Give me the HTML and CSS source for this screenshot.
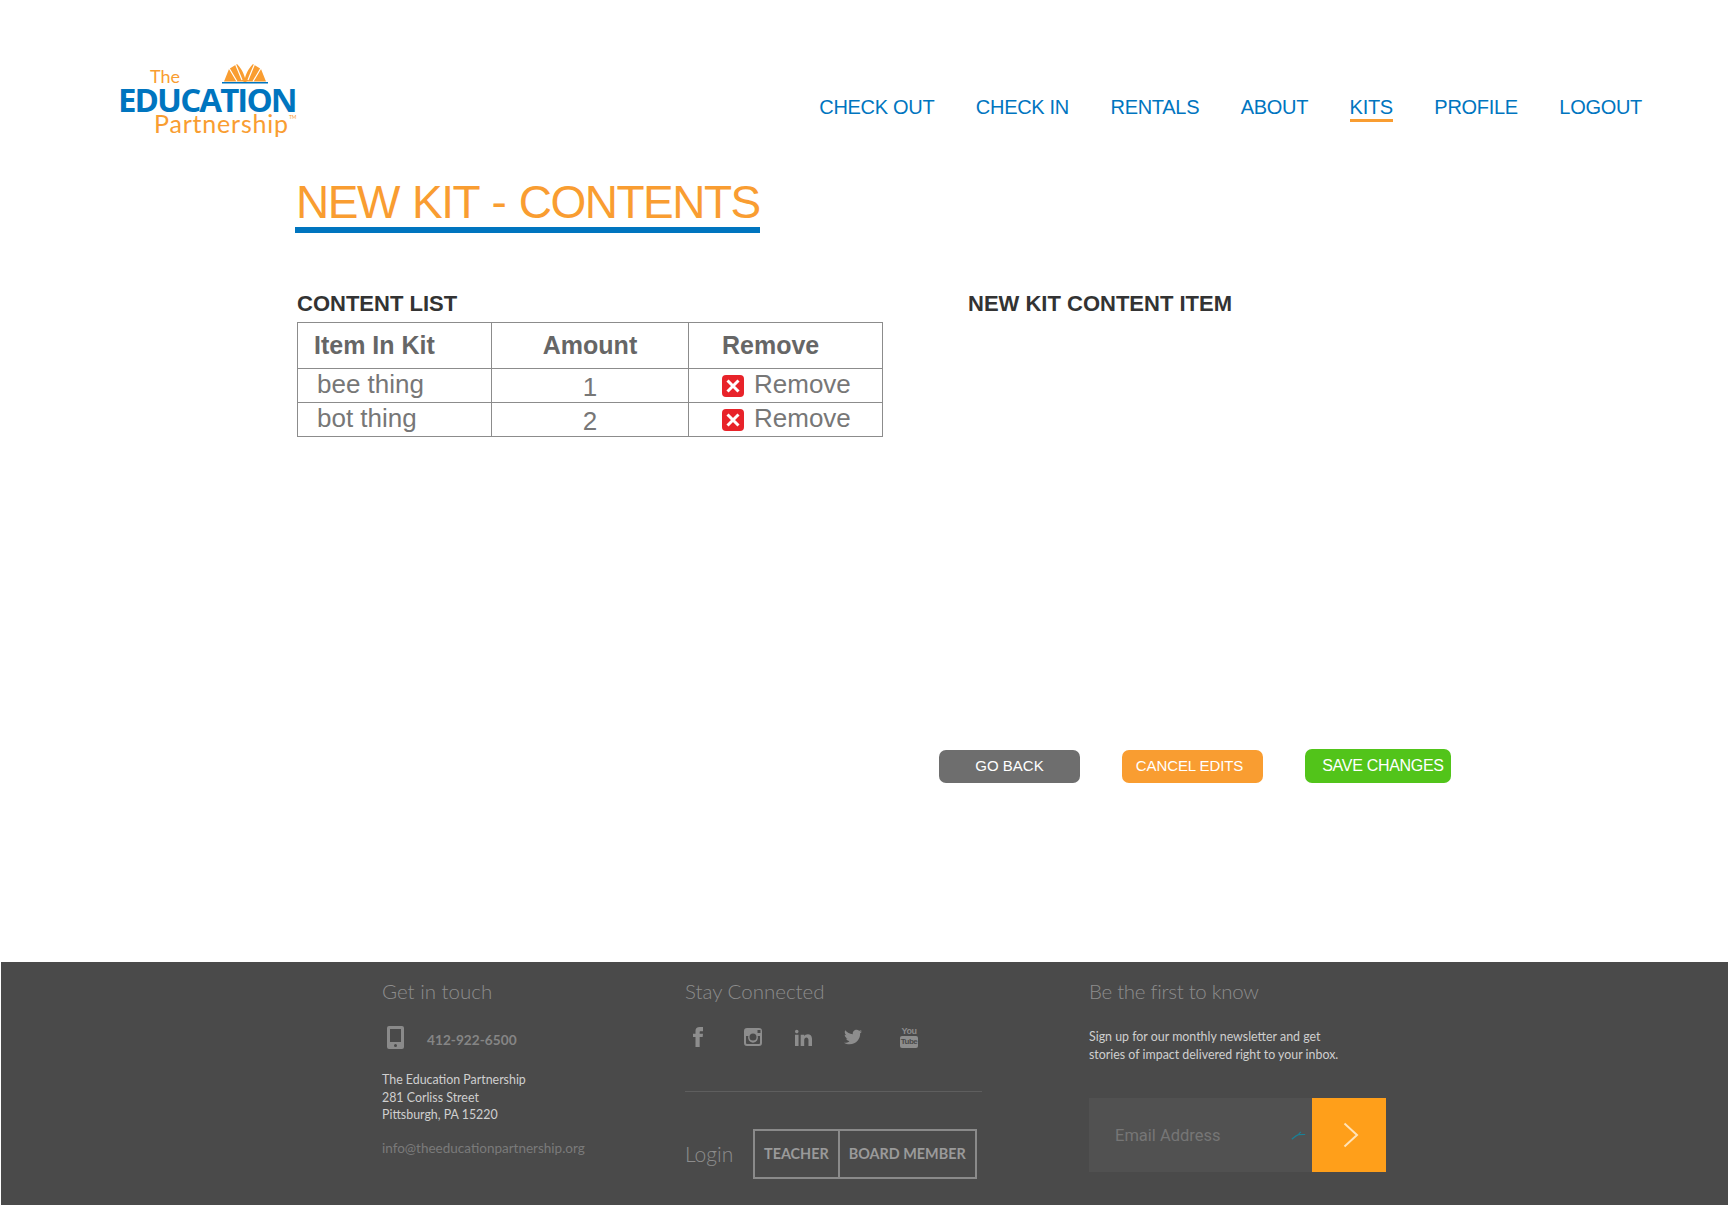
FILE: index.html
```html
<!DOCTYPE html>
<html lang="en">
<head>
  <meta charset="UTF-8" />
  <title>New Kit - Contents</title>
  <link rel="stylesheet" href="styles.css">
</head>
<body>
  <header class="site-header">
    <a class="logo" href="#">
      <div class="logo-top">
        <span class="logo-the">The</span>
        <svg class="logo-book" viewBox="0 0 46 21" width="46" height="21">
          <path fill="#f99d31" d="M2 18.500 7 6l8-5c3 3 6 7 8 14 2-7 5-11 8-14l8 5 5 12.500H25l-2 1-2-1z"/>
          <path fill="none" stroke="#fff" stroke-width="1.200" d="M15 18.500 7 5M20 17 13 0M26 17 33 0M31 18.500 39 5"/>
          <rect x="0" y="19" width="46" height="1.500" fill="#0075bf"/>
        </svg>
      </div>
      <div class="logo-main">EDUCATION</div>
      <div class="logo-sub">Partnership<sup>TM</sup></div>
    </a>
    <nav class="main-nav">
      <a href="#">CHECK OUT</a>
      <a href="#">CHECK IN</a>
      <a href="#">RENTALS</a>
      <a href="#">ABOUT</a>
      <a href="#" class="active">KITS</a>
      <a href="#">PROFILE</a>
      <a href="#">LOGOUT</a>
    </nav>
  </header>

  <main class="content">
    <h1 class="page-title">NEW KIT - CONTENTS</h1>

    <div class="columns">
      <section class="list-col">
        <h2>CONTENT LIST</h2>
        <table class="kit-table">
          <thead>
            <tr>
              <th class="col-item">Item In Kit</th>
              <th class="col-amount">Amount</th>
              <th class="col-remove">Remove</th>
            </tr>
          </thead>
          <tbody>
            <tr>
              <td class="col-item">bee thing</td>
              <td class="col-amount">1</td>
              <td class="col-remove">
                <span class="remove-link">
                  <svg class="x-icon" viewBox="0 0 22 22" width="22" height="22"><rect width="22" height="22" rx="4" fill="#e8232a"/><path d="M5.500 5.500l11 11M16.500 5.500l-11 11" stroke="#fff" stroke-width="3"/></svg>
                  Remove
                </span>
              </td>
            </tr>
            <tr>
              <td class="col-item">bot thing</td>
              <td class="col-amount">2</td>
              <td class="col-remove">
                <span class="remove-link">
                  <svg class="x-icon" viewBox="0 0 22 22" width="22" height="22"><rect width="22" height="22" rx="4" fill="#e8232a"/><path d="M5.500 5.500l11 11M16.500 5.500l-11 11" stroke="#fff" stroke-width="3"/></svg>
                  Remove
                </span>
              </td>
            </tr>
          </tbody>
        </table>
      </section>
      <section class="item-col">
        <h2>NEW KIT CONTENT ITEM</h2>
      </section>
    </div>

    <div class="actions">
      <button class="btn btn-back">GO BACK</button>
      <button class="btn btn-cancel">CANCEL EDITS</button>
      <button class="btn btn-save">SAVE CHANGES</button>
    </div>
  </main>

  <footer class="site-footer">
    <div class="foot-col foot-touch">
      <h3>Get in touch</h3>
      <div class="phone-row">
        <svg viewBox="0 0 17 23" width="17" height="23"><path fill="#8a8a8a" fill-rule="evenodd" d="M2 0h13a2 2 0 0 1 2 2v19a2 2 0 0 1-2 2H2a2 2 0 0 1-2-2V2a2 2 0 0 1 2-2zm1 3v13h11V3zm5.500 15a1.500 1.500 0 1 0 0 3 1.500 1.500 0 0 0 0-3z"/></svg>
        <span>412-922-6500</span>
      </div>
      <p class="address">The Education Partnership<br>281 Corliss Street<br>Pittsburgh, PA 15220</p>
      <a class="foot-mail" href="#">info@theeducationpartnership.org</a>
    </div>

    <div class="foot-col foot-social">
      <h3>Stay Connected</h3>
      <div class="social-row">
        <svg class="ico-f" viewBox="0 0 24 24" width="20" height="20"><path d="M9 8H6v4h3v12h5V12h3.600l.4-4h-4V6.300c0-1 .2-1.300 1.100-1.300H18V0h-3.800C10.600 0 9 1.600 9 4.600z"/></svg>
        <svg class="ico-ig" viewBox="0 0 18 18" width="18" height="18"><path fill-rule="evenodd" d="M3 0h12a3 3 0 0 1 3 3v12a3 3 0 0 1-3 3H3a3 3 0 0 1-3-3V3a3 3 0 0 1 3-3zm10.500 2v3h3V2zM2 8v7a1 1 0 0 0 1 1h12a1 1 0 0 0 1-1V8h-2.300a5 5 0 1 1-9.400 0zm7-2.500a3.500 3.500 0 1 0 0 7 3.500 3.500 0 0 0 0-7z"/></svg>
        <svg class="ico-in" viewBox="0 0 24 24" width="17" height="17"><path d="M4.980 3.500c0 1.381-1.110 2.500-2.480 2.500s-2.480-1.119-2.480-2.500c0-1.380 1.110-2.500 2.480-2.500s2.480 1.120 2.480 2.500zm.02 4.500h-5v16h5v-16zm7.982 0h-4.968v16h4.969v-8.399c0-4.670 6.029-5.052 6.029 0v8.399h4.988v-10.131c0-7.880-8.922-7.593-11.018-3.714v-2.155z"/></svg>
        <svg class="ico-tw" viewBox="0 0 24 24" width="18" height="18"><path d="M24 4.557c-.883.392-1.832.656-2.828.775 1.017-.609 1.798-1.574 2.165-2.724-.951.564-2.005.974-3.127 1.195-.897-.957-2.178-1.555-3.594-1.555-3.179 0-5.515 2.966-4.797 6.045-4.091-.205-7.719-2.165-10.148-5.144-1.290 2.213-.669 5.108 1.523 6.574-.806-.026-1.566-.247-2.229-.616-.054 2.281 1.581 4.415 3.949 4.890-.693.188-1.452.232-2.224.084.626 1.956 2.444 3.379 4.600 3.419-2.070 1.623-4.678 2.348-7.290 2.040 2.179 1.397 4.768 2.212 7.548 2.212 9.142 0 14.307-7.721 13.995-14.646.962-.695 1.797-1.562 2.457-2.549z"/></svg>
        <span class="ico-yt"><span class="yt-you">You</span><span class="yt-tube">Tube</span></span>
      </div>
      <hr class="foot-rule">
      <div class="login-row">
        <span class="login-label">Login</span>
        <div class="login-btns">
          <a href="#">TEACHER</a>
          <a href="#">BOARD MEMBER</a>
        </div>
      </div>
    </div>

    <div class="foot-col foot-news">
      <h3>Be the first to know</h3>
      <p class="news-text">Sign up for our monthly newsletter and get<br>stories of impact delivered right to your inbox.</p>
      <form class="news-form">
        <div class="email-field">
          <span>Email Address</span>
          <svg viewBox="0 0 18 10" width="15" height="9"><path fill="none" stroke="#1b7f95" stroke-width="1.500" d="M1 9.500C4 7 6 5 9 4l8-.2M9 4C9.500 2.800 10.500 1.500 12 .8"/></svg>
        </div>
        <button type="button" class="email-go">
          <svg viewBox="0 0 16 26" width="16" height="26"><path fill="none" stroke="#ffe3b8" stroke-width="2" d="M1.500 1.500 14 13 1.500 24.500"/></svg>
        </button>
      </form>
    </div>
  </footer>
</body>
</html>
```

FILE: styles.css
```css
* {
  box-sizing: border-box;
}
html, body {
  height: 100%;
}
body {
  margin: 0;
  height: 1205px;
  overflow: hidden;
  display: flex;
  flex-direction: column;
  background: #fff;
  font-family: "Liberation Sans", Arial, sans-serif;
}
a {
  text-decoration: none;
  color: inherit;
}

/* header */
.site-header {
  display: flex;
  justify-content: space-between;
  align-items: flex-start;
  padding: 62px 86px 0 118px;
  height: 176px;
}
.logo {
  display: block;
  width: 180px;
  font-family: "Lato", sans-serif;
}
.logo-top {
  display: flex;
  align-items: flex-end;
  height: 25px;
  padding-left: 32px;
}
.logo-the {
  color: #f99d31;
  font-size: 18px;
  line-height: 18px;
  width: 72px;
  margin-bottom: 2px;
}
.logo-book {
  display: block;
  margin-bottom: 3px;
}
.logo-main {
  color: #0075bf;
  font-family: "Open Sans", sans-serif;
  font-weight: 700;
  font-size: 33px;
  line-height: 26px;
  letter-spacing: -1.9px;
  white-space: nowrap;
}
.logo-sub {
  color: #f99d31;
  font-size: 25px;
  line-height: 20px;
  padding-left: 36px;
  letter-spacing: 0.800px;
  white-space: nowrap;
}
.logo-sub sup {
  font-size: 5px;
  vertical-align: 14px;
  line-height: 0;
  letter-spacing: 0;
}
.main-nav {
  display: flex;
  gap: 41.500px;
  margin-top: 34px;
  font-size: 20px;
  letter-spacing: -0.300px;
  color: #0075bf;
}
.main-nav a {
  line-height: 23px;
  border-bottom: 3px solid transparent;
}
.main-nav a.active {
  border-bottom-color: #f99d31;
}

/* main */
.content {
  flex: 1;
  padding-left: 295px;
}
.page-title {
  display: inline-block;
  margin: 1px 0 0;
  font-size: 46px;
  font-weight: 400;
  line-height: 50px;
  letter-spacing: -1.500px;
  word-spacing: 2px;
  color: #f99d31;
  padding: 0 0 0 1px;
  border-bottom: 6px solid #0075bf;
}
.columns {
  display: flex;
  margin-top: 58px;
  height: 458px;
}
.list-col {
  width: 673px;
  padding-left: 2px;
}
.columns h2 {
  margin: 0 0 6px;
  font-size: 22px;
  line-height: 25px;
  color: #333;
}
.kit-table {
  width: 586px;
  table-layout: fixed;
  border-collapse: collapse;
  color: #777;
}
.kit-table th, .kit-table td {
  border: 1.500px solid #8c8c8c;
  padding: 0;
}
.kit-table th {
  height: 46px;
  font-size: 25px;
  color: #666;
  text-align: left;
}
.kit-table td {
  height: 34px;
  font-size: 26px;
  line-height: 30px;
  padding-bottom: 3px;
}
.kit-table th.col-item {
  width: 194px;
  padding-left: 16px;
}
.kit-table td.col-item {
  padding-left: 19px;
}
.kit-table .col-amount {
  width: 197px;
  text-align: center;
}
.kit-table td.col-amount {
  padding: 2px 0 0;
}
.kit-table .col-remove {
  padding-left: 33px;
}
.remove-link {
  display: flex;
  align-items: center;
  gap: 10px;
}
.x-icon {
  flex-shrink: 0;
  margin-top: 4px;
}
.actions {
  display: flex;
  align-items: flex-end;
  gap: 42px;
  padding-left: 644px;
}
.btn {
  width: 141px;
  height: 33px;
  border: 0;
  border-radius: 7px;
  color: #fff;
  font-family: inherit;
  font-size: 15px;
  padding: 0 0 2px;
}
.btn-back {
  background: #6e6e6e;
}
.btn-cancel {
  padding-right: 6px;
  letter-spacing: -0.100px;
  background: #f99d31;
}
.btn-save {
  width: 146px;
  height: 34px;
  padding: 0 0 0 10px;
  font-size: 16px;
  letter-spacing: -0.300px;
  background: #52c41a;
}

/* footer */
.site-footer {
  display: flex;
  height: 243px;
  margin-left: 1px;
  padding: 14px 0 0 381px;
  background: #4a4a4a;
  font-family: "Lato", sans-serif;
}
.foot-col h3 {
  margin: 0;
  font-size: 20.500px;
  font-weight: 300;
  line-height: 30px;
  color: #8d8d8d;
}
.foot-touch {
  width: 303px;
}
.phone-row {
  display: flex;
  align-items: center;
  gap: 23px;
  margin: 20px 0 0 5px;
  font-size: 13.700px;
  font-weight: 700;
  color: #858585;
}
.phone-row span {
  padding-top: 4px;
}
.address {
  margin: 22px 0 0;
  font-size: 12.400px;
  line-height: 17.500px;
  color: #cfcfcf;
}
.foot-mail {
  display: block;
  margin-top: 16px;
  font-size: 13.500px;
  color: #7a7a7a;
}
.foot-social {
  width: 404px;
}
.social-row {
  display: flex;
  align-items: center;
  height: 26px;
  margin-top: 18px;
  fill: #8d8d8d;
}
.ico-f { margin-left: 3px; }
.ico-ig { margin-left: 36px; }
.ico-in { margin-left: 33px; }
.ico-tw { margin-left: 32px; }
.ico-yt {
  display: flex;
  flex-direction: column;
  align-items: center;
  width: 18px;
  margin-left: 38px;
  font-family: "Liberation Sans", sans-serif;
  font-weight: 700;
  color: #8d8d8d;
}
.yt-you {
  font-size: 9px;
  line-height: 10px;
  letter-spacing: -0.500px;
}
.yt-tube {
  width: 18px;
  height: 12px;
  border-radius: 2px;
  background: #8d8d8d;
  color: #4a4a4a;
  font-size: 8px;
  line-height: 12px;
  text-align: center;
  letter-spacing: -0.500px;
}
.foot-rule {
  width: 297px;
  margin: 41px 0 0;
  border: 0;
  border-top: 1px solid #5e5e5e;
}
.login-row {
  display: flex;
  align-items: center;
  margin-top: 37px;
}
.login-label {
  width: 68px;
  padding-bottom: 2px;
  font-size: 21px;
  font-weight: 300;
  color: #8d8d8d;
}
.login-btns {
  display: flex;
  height: 50px;
  border: 2px solid #8a8a8a;
  color: #9a9a9a;
  font-size: 14.400px;
  font-weight: 700;
  line-height: 45px;
}
.login-btns a {
  padding: 0 9px;
}
.login-btns a + a {
  border-left: 2px solid #8a8a8a;
}
.foot-news h3 {
  letter-spacing: -0.300px;
}
.news-text {
  margin: 22px 0 0;
  font-size: 12.400px;
  line-height: 17.500px;
  color: #cfcfcf;
}
.news-form {
  display: flex;
  margin-top: 35px;
  width: 297px;
  height: 74px;
}
.email-field {
  flex: 1;
  display: flex;
  align-items: center;
  justify-content: space-between;
  padding: 0 6px 0 26px;
  background: #515151;
  font-family: "Roboto", sans-serif;
  font-size: 16.500px;
  color: #767676;
}
.email-go {
  width: 74px;
  padding: 2px 0 0 3px;
  border: 0;
  background: #ff9f1a;
}
```
